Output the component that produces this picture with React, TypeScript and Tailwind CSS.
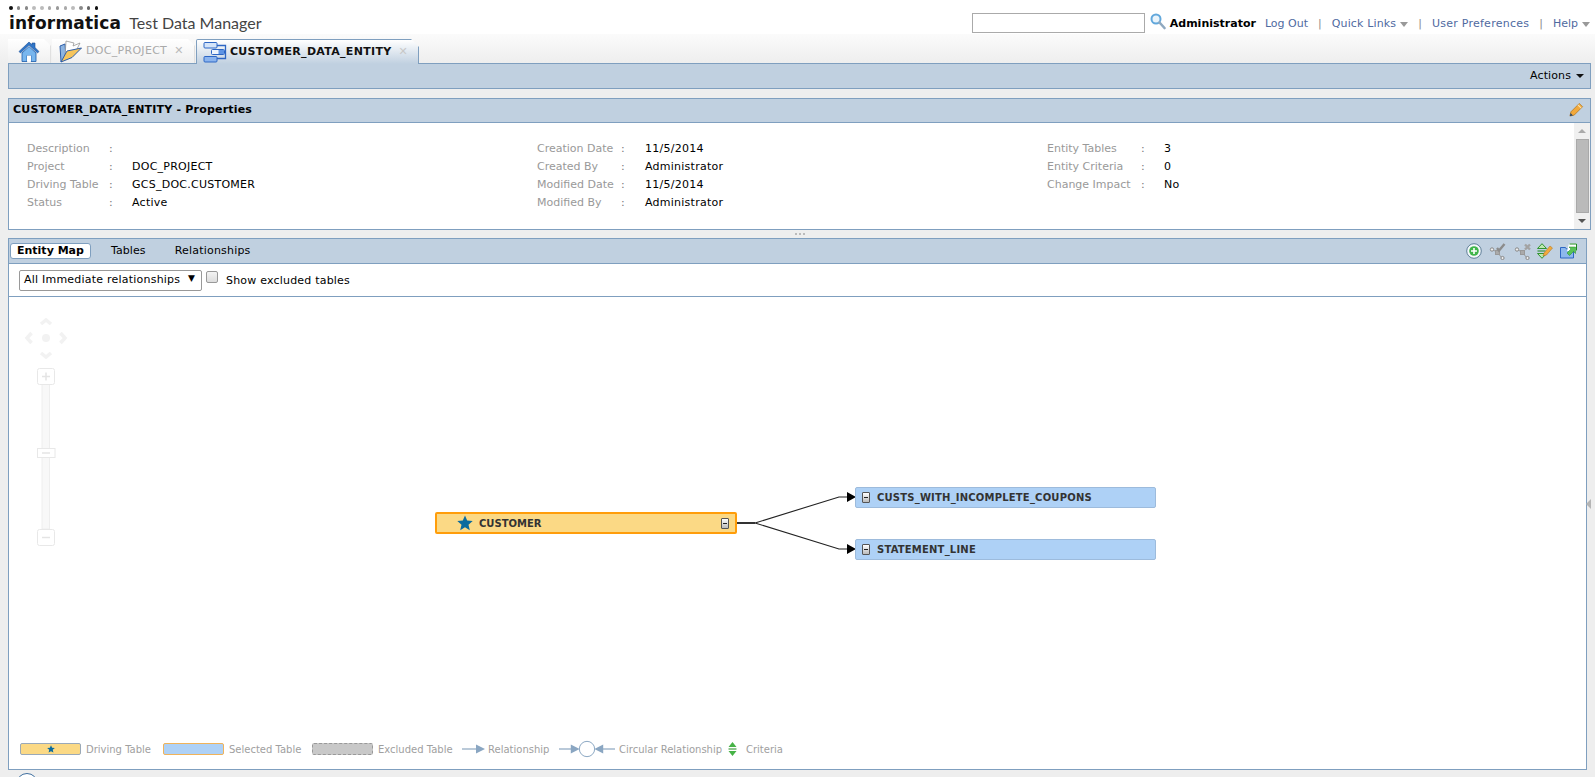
import React from 'react';

const dotColors = ['#111', '#888', '#888', '#bbb', '#bbb', '#aaa', '#999', '#aaa', '#bbb', '#888', '#666', '#111'];

const propertyColumns = [
  {
    labelClass: 'w-[82px]',
    colonClass: 'w-[23px]',
    rows: [
      ['Description', ''],
      ['Project', 'DOC_PROJECT'],
      ['Driving Table', 'GCS_DOC.CUSTOMER'],
      ['Status', 'Active'],
    ],
  },
  {
    labelClass: 'w-[84px]',
    colonClass: 'w-[24px]',
    rows: [
      ['Creation Date', '11/5/2014'],
      ['Created By', 'Administrator'],
      ['Modified Date', '11/5/2014'],
      ['Modified By', 'Administrator'],
    ],
  },
  {
    labelClass: 'w-[94px]',
    colonClass: 'w-[23px]',
    rows: [
      ['Entity Tables', '3'],
      ['Entity Criteria', '0'],
      ['Change Impact', 'No'],
    ],
  },
];

const HomeIcon = () => (
  <svg width="22" height="21" viewBox="0 0 22 21">
    <path d="M1 10.500 11 1l3 2.800V2h3v4.600l4 3.900-1.500 1.500L11 4 2.500 12z" fill="#2f76c8" stroke="#1c4f96" strokeWidth="0.6" />
    <path d="M4 12 11 5.500l7 6.500v8.500h-5v-6H9v6H4z" fill="#78b6ee" stroke="#1c5aa8" strokeWidth="0.8" />
    <path d="M9 14.500h4v6H9z" fill="#fff" />
  </svg>
);

const FolderIcon = () => (
  <svg width="23" height="23" viewBox="0 0 23 23">
    <path d="M2 22 1 6l5-2 1 13z" fill="#8db4e0" stroke="#2d5da8" />
    <path d="M6 17 7 1l8 2-1 3 7-3-4 8z" fill="#fff" stroke="#8a8a8a" strokeWidth="0.7" />
    <path d="M2 22 8 11 22.500 8 13 17.500z" fill="#f6c55c" stroke="#2d5da8" />
  </svg>
);

const EntityIcon = () => (
  <svg width="25" height="22" viewBox="0 0 25 22">
    <path d="M14 4.500h8.500v13H14M21 11h2" fill="none" stroke="#2d66c4" strokeWidth="1.300" />
    <rect x="1" y="1.500" width="13" height="5.500" rx="1" fill="#d4e4f9" stroke="#2d66c4" />
    <rect x="8.500" y="8.500" width="13" height="5" rx="1" fill="#eef5fd" stroke="#2d66c4" />
    <path d="M15.500 9h5.500v4h-5.500z" fill="#5e94e4" />
    <rect x="1" y="15.500" width="13" height="5.500" rx="1" fill="#8bb4ee" stroke="#2d66c4" />
  </svg>
);

const SearchIcon = () => (
  <svg width="16" height="17" viewBox="0 0 16 17">
    <circle cx="6" cy="6" r="4.500" fill="#eaf4fb" stroke="#62a8dc" strokeWidth="2" />
    <path d="m9.500 9.500 5 5.500" stroke="#8fa9c0" strokeWidth="2.600" strokeLinecap="round" />
  </svg>
);

const PencilIcon = () => (
  <svg width="15" height="15" viewBox="0 0 16 16">
    <path d="M1 15 2 10.500 11 1.500l3.500 3.500-9 9z" fill="#f2a93b" stroke="#a9701a" strokeWidth="0.7" />
    <path d="M9.500 3 13 6.500" stroke="#fbe3b0" strokeWidth="1.200" />
    <path d="M1 15 1.700 11.800 4.200 14.300z" fill="#24456e" />
  </svg>
);

const NodesIcon = ({ mark }: { mark: 'check' | 'x' }) => (
  <svg width="18" height="17" viewBox="0 0 18 17">
    <path d="M3 6.500 8 9l5 6" stroke="#999" strokeWidth="1" fill="none" />
    <circle cx="3" cy="6.500" r="1.700" fill="#eee" stroke="#888" />
    <rect x="6.500" y="7.500" width="4" height="4" fill="#aaa" stroke="#999" />
    <circle cx="13.500" cy="15" r="1.600" fill="#eee" stroke="#888" />
    {mark === 'check' ? (
      <path d="M8 5 10 7.500 15.500 1" fill="none" stroke="#8c8c8c" strokeWidth="2.400" />
    ) : (
      <path d="m11 1.500 5 5m0-5-5 5" fill="none" stroke="#a3a3a3" strokeWidth="2.400" />
    )}
  </svg>
);

const ToolbarIcons = () => (
  <div className="flex items-center gap-[7px] pr-[9px]">
    <svg width="16" height="16" viewBox="0 0 16 16">
      <circle cx="8" cy="8" r="7.300" fill="#f4f8fb" stroke="#5f7f98" />
      <circle cx="8" cy="8" r="4.800" fill="#3fb54a" />
      <path d="M8 5v6M5 8h6" stroke="#fff" strokeWidth="1.600" />
    </svg>
    <NodesIcon mark="check" />
    <NodesIcon mark="x" />
    <svg className="-ml-[2px]" width="16" height="16" viewBox="0 0 16 16">
      <path d="M5 .7 9.500 5.500h-9zM5 15.300.5 10.500h9z" fill="#bfe8b0" stroke="#1f8a1f" strokeWidth="0.900" />
      <path d="M.5 8h8" stroke="#1f8a1f" />
      <path d="m6 13 1-3 6-7 2.500 2-6 7z" fill="#f2a93b" stroke="#a9701a" strokeWidth="0.500" />
    </svg>
    <svg width="17" height="16" viewBox="0 0 17 16">
      <path d="M.5 4.500h5l1 1.500h7v9H.5z" fill="#8db8ec" stroke="#2d66c4" />
      <path d="M7 8h9.500v-7.500H9z" fill="#fff" />
      <path d="M9.500 1h7v6.500" fill="none" stroke="#1f8a1f" />
      <path d="m7 10 4-4-2-2h6.500v6.500l-2-2-4 4z" fill="#57c257" stroke="#1f8a1f" strokeWidth="0.500" />
    </svg>
  </div>
);

const PanZoomControl = () => (
  <svg className="absolute left-[15px] top-[15px]" width="48" height="240" viewBox="0 0 48 240" fill="none">
    <g stroke="#f2f2f2" strokeWidth="3.500">
      <path d="m17 12 5-4 5 4M17 41l5 4 5-4M7.500 21l-4.500 5 4.500 5M36.500 21l4.500 5-4.500 5" />
    </g>
    <circle cx="22" cy="26" r="4" fill="#f2f2f2" />
    <path d="M18 72h7.500v145H18z" fill="#f8f8f8" stroke="#eeeeee" />
    <rect x="13.500" y="56.500" width="17" height="16" rx="2" fill="#fff" stroke="#e8e8e8" />
    <path d="M18 64.500h8M22 60.500v8" stroke="#e4e4e4" strokeWidth="1.500" />
    <rect x="13.500" y="136.500" width="17.500" height="9" fill="#fff" stroke="#e8e8e8" />
    <path d="M18 141h8" stroke="#e4e4e4" strokeWidth="1.500" />
    <rect x="13.500" y="217.500" width="17" height="16" rx="2" fill="#fff" stroke="#e8e8e8" />
    <path d="M18 225.500h8" stroke="#e4e4e4" strokeWidth="1.500" />
  </svg>
);

const CollapseBox = ({ className }: { className: string }) => (
  <span className={`${className} flex h-[11px] w-[8px] items-center justify-center rounded-[1px] border border-[#555] bg-gradient-to-b from-white to-[#bbb]`}>
    <span className="h-px w-[4px] bg-[#222]" />
  </span>
);

const StarIcon = ({ size }: { size: number }) => (
  <svg width={size} height={size} viewBox="0 0 16 16">
    <path d="M8 .5 10.200 5.600l5.500.5-4.200 3.600 1.300 5.500L8 12.300l-4.800 2.900 1.300-5.500L.3 6.100l5.500-.5z" fill="#0b6b9e" />
  </svg>
);

const TableNode = ({ name, className }: { name: string; className: string }) => (
  <div className={`${className} absolute flex h-[21px] w-[301px] items-center rounded-[2px] border border-[#9dbbdc] bg-[#aed1f6] pl-[6px] text-[10px] font-bold tracking-[0.2px] text-[#333]`}>
    <CollapseBox className="mr-[7px]" />
    {name}
  </div>
);

const Legend = () => (
  <div className="flex h-[12px] items-center text-[10px] text-[#a0a0a0]">
    <span className="flex h-[12px] w-[61px] items-center justify-center rounded-[2px] border border-[#9aa9b8] bg-[#fbd985]">
      <StarIcon size={8} />
    </span>
    <span className="ml-[5px] w-[77px]">Driving Table</span>
    <span className="h-[12px] w-[61px] rounded-[2px] border border-[#f0b35a] bg-[#aed1f6]" />
    <span className="ml-[5px] w-[83px]">Selected Table</span>
    <span className="h-[12px] w-[61px] rounded-[2px] border border-dashed border-[#999] bg-[#c8c8c8]" />
    <span className="ml-[5px] w-[84px]">Excluded Table</span>
    <svg width="25" height="12" viewBox="0 0 25 12">
      <path d="M0 6h16" stroke="#a3b8cd" strokeWidth="1.500" />
      <path d="M14 1.500 23 6l-9 4.500z" fill="#8aa6c2" />
    </svg>
    <span className="ml-[1px] w-[71px]">Relationship</span>
    <svg className="-my-2" width="56" height="20" viewBox="0 0 57 20">
      <path d="M0 10h13M44 10h13" stroke="#a3b8cd" strokeWidth="1.500" />
      <path d="M12 5.500 21 10l-9 4.500zM45 5.500 36 10l9 4.500z" fill="#8aa6c2" />
      <circle cx="28.500" cy="10" r="7.800" fill="#fff" stroke="#8aa6c2" />
    </svg>
    <span className="ml-[4px] w-[109px]">Circular Relationship</span>
    <svg width="9" height="14" viewBox="0 0 9 14">
      <path d="M4.500 0 8.500 5h-8zM4.500 14 .5 9h8z" fill="#47b347" />
      <path d="M.5 7h8" stroke="#1f8a1f" />
    </svg>
    <span className="ml-[9px]">Criteria</span>
  </div>
);

export default function App() {
  return (
    <div className="relative h-[777px] w-full overflow-hidden bg-[#eeeeee] font-['DejaVu_Sans',sans-serif] text-[11px] text-black">
      {/* top bar */}
      <header className="flex h-[34px] items-start justify-between bg-white">
        <div className="pl-[9px] pt-[6px]">
          <div className="flex gap-[4.300px]">
            {dotColors.map((c, i) => (
              <span key={i} className="h-[3.500px] w-[3.500px] rounded-full" style={{ background: c }} />
            ))}
          </div>
          <div className="mt-[3px] flex items-baseline">
            <span className="text-[17px] leading-[20px] font-bold tracking-[0.2px] text-[#111]">informatica</span>
            <span className="ml-[8px] font-['Lato',sans-serif] text-[16px] leading-[20px] text-[#444]">Test Data Manager</span>
          </div>
        </div>
        <div className="flex items-center pt-[13px] pr-[5px]">
          <div className="h-[20px] w-[173px] border border-[#aaa] bg-white" />
          <span className="ml-[5px] mr-[4px] -mt-[3px]"><SearchIcon /></span>
          <div className="mt-[3px] flex items-center">
            <span className="font-bold">Administrator</span>
            <span className="ml-[9px] text-[#4f6a9f]">Log Out</span>
            <span className="mx-[10px] text-[#8a8a8a]">|</span>
            <span className="tracking-[0.15px] text-[#4f6a9f]">Quick Links</span>
            <span className="ml-[4px] border-x-[4.500px] border-t-[5px] border-x-transparent border-t-[#999]" />
            <span className="mx-[10px] text-[#8a8a8a]">|</span>
            <span className="tracking-[0.25px] text-[#4f6a9f]">User Preferences</span>
            <span className="mx-[10px] text-[#8a8a8a]">|</span>
            <span className="text-[#4f6a9f]">Help</span>
            <span className="ml-[4px] border-x-[4.500px] border-t-[5px] border-x-transparent border-t-[#999]" />
          </div>
        </div>
      </header>

      {/* tabs */}
      <div className="flex h-[29px] items-end bg-gradient-to-b from-[#fbfbfb] to-[#eeeeee] pl-[8px]">
        <div className="flex h-[24px] w-[43px] items-center justify-center border-r border-[#e0e0e0] bg-gradient-to-b from-white to-[#f0f0f0] [clip-path:polygon(0_0,calc(100%-7px)_0,100%_7px,100%_100%,0_100%)]">
          <HomeIcon />
        </div>
        <div className="ml-[1px] flex h-[24px] w-[143px] items-center border-r border-[#e0e0e0] bg-gradient-to-b from-white to-[#f0f0f0] pl-[7px] text-[#aaa] [clip-path:polygon(0_0,calc(100%-7px)_0,100%_7px,100%_100%,0_100%)]">
          <FolderIcon />
          <span className="ml-[4px] tracking-[0.3px]">DOC_PROJECT</span>
          <span className="ml-[7px] font-bold text-[#bbb]">✕</span>
        </div>
        <div className="relative z-10 -mb-px ml-px flex h-[25px] w-[223px] items-center rounded-tl-[2px] border border-b-0 border-[#7f9fbf] bg-gradient-to-b from-white to-[#c0d0e0] pl-[6px] font-bold text-[#111] [clip-path:polygon(0_0,calc(100%-8px)_0,100%_8px,100%_100%,0_100%)]">
          <EntityIcon />
          <span className="ml-[2px] tracking-[0.3px]">CUSTOMER_DATA_ENTITY</span>
          <span className="ml-[7px] font-bold text-[#c8c8c8]">✕</span>
        </div>
      </div>

      <main className="flex h-[714px] flex-col pl-[8px] pr-[4px]">
        {/* actions bar */}
        <div className="flex h-[26px] shrink-0 items-center justify-end border border-[#7f9fbf] bg-[#c0d0e0] pr-[6px]">
          <span className="tracking-[0.1px]">Actions</span>
          <span className="ml-[5px] border-x-[4px] border-t-[4px] border-x-transparent border-t-[#111]" />
        </div>

        {/* properties */}
        <section className="mt-[9px] flex h-[132px] shrink-0 flex-col border border-[#7f9fbf] bg-white">
          <div className="flex h-[24px] shrink-0 items-center justify-between border-b border-[#7f9fbf] bg-[#c0d0e0] pl-[4px] pr-[6px] font-bold">
            <span className="tracking-[0.2px]">CUSTOMER_DATA_ENTITY - Properties</span>
            <span className="-mt-[3px]"><PencilIcon /></span>
          </div>
          <div className="flex min-h-0 flex-1">
            <div className="grid flex-1 grid-cols-[510px_510px_1fr] pl-[18px] pt-[17px]">
              {propertyColumns.map((col, i) => (
                <div key={i}>
                  {col.rows.map(([label, value]) => (
                    <div key={label} className="flex h-[18px] items-center">
                      <span className={`${col.labelClass} text-[#999]`}>{label}</span>
                      <span className={`${col.colonClass} text-[#777]`}>:</span>
                      <span className="tracking-[0.25px]">{value}</span>
                    </div>
                  ))}
                </div>
              ))}
            </div>
            <div className="flex w-[16px] shrink-0 flex-col items-center bg-[#f0f0f0] py-[6px]">
              <span className="border-x-[4px] border-b-[4px] border-x-transparent border-b-[#aaa]" />
              <div className="my-[6px] w-[13px] flex-1 border border-[#a9a9a9] bg-[#bababa]" />
              <span className="border-x-[4px] border-t-[4px] border-x-transparent border-t-[#555]" />
            </div>
          </div>
        </section>

        {/* splitter */}
        <div className="flex h-[8px] shrink-0 items-center justify-center gap-[2px]">
          <span className="h-[2px] w-[2px] rounded-full bg-[#aaa]" />
          <span className="h-[2px] w-[2px] rounded-full bg-[#aaa]" />
          <span className="h-[2px] w-[2px] rounded-full bg-[#aaa]" />
        </div>

        {/* entity panel */}
        <section className="mr-[4px] flex h-[532px] shrink-0 flex-col border border-[#7f9fbf] bg-white">
          <div className="flex h-[25px] shrink-0 items-center justify-between border-b border-[#7f9fbf] bg-[#c0d0e0] pl-[1px]">
            <div className="flex items-center">
              <span className="rounded-[3px] border border-[#7f9fbf] bg-white px-[6px] font-bold leading-[14px]">Entity Map</span>
              <span className="ml-[20px] tracking-[0.1px]">Tables</span>
              <span className="ml-[29px] tracking-[0.2px]">Relationships</span>
            </div>
            <ToolbarIcons />
          </div>
          <div className="flex h-[33px] shrink-0 items-center border-b border-[#7f9fbf] pl-[10px]">
            <div className="flex h-[21px] w-[183px] items-center justify-between rounded-[2px] border border-[#999] pl-[4px] pr-[6px]">
              <span className="mt-px tracking-[0.22px]">All Immediate relationships</span>
              <span className="-mt-[2px] text-[9px]">▼</span>
            </div>
            <span className="mb-[6px] ml-[4px] h-[12px] w-[12px] rounded-[2px] border border-[#999] bg-gradient-to-b from-[#f4f4f4] to-[#ddd]" />
            <span className="mt-[2px] ml-[8px] tracking-[0.2px]">Show excluded tables</span>
          </div>
          <div className="relative flex min-h-0 flex-1 flex-col justify-end pb-[14px] pl-[11px]">
            <PanZoomControl />
            <svg className="absolute left-0 top-0" width="900" height="280" viewBox="0 0 900 280" fill="none">
              <path d="M728 226h18" stroke="#333" strokeWidth="2" />
              <path d="M746 226 830 200h9M746 226 830 252h9" stroke="#222" strokeWidth="1.100" />
              <path d="M838 195 847 200l-9 5zM838 247 847 252l-9 5z" fill="#000" />
            </svg>
            <div className="absolute left-[426px] top-[215px] flex h-[22px] w-[302px] items-center rounded-[2px] border-2 border-[#ff9d0a] bg-[#fbd985] pl-[20px] pr-[6px] text-[10px] font-bold text-[#333]">
              <StarIcon size={16} />
              <span className="ml-[6px]">CUSTOMER</span>
              <CollapseBox className="ml-auto" />
            </div>
            <TableNode name="CUSTS_WITH_INCOMPLETE_COUPONS" className="left-[846px] top-[190px]" />
            <TableNode name="STATEMENT_LINE" className="left-[846px] top-[242px]" />
            <Legend />
          </div>
        </section>
      </main>

      {/* side collapse handle */}
      <span className="absolute left-[1586px] top-[499px] border-y-[5px] border-r-[5px] border-y-transparent border-r-[#b5b5b5]" />
      {/* clipped widget at the page bottom */}
      <span className="absolute left-[16px] top-[773px] h-[24px] w-[22px] rounded-full border border-[#3f6f9f] bg-white" />
    </div>
  );
}
